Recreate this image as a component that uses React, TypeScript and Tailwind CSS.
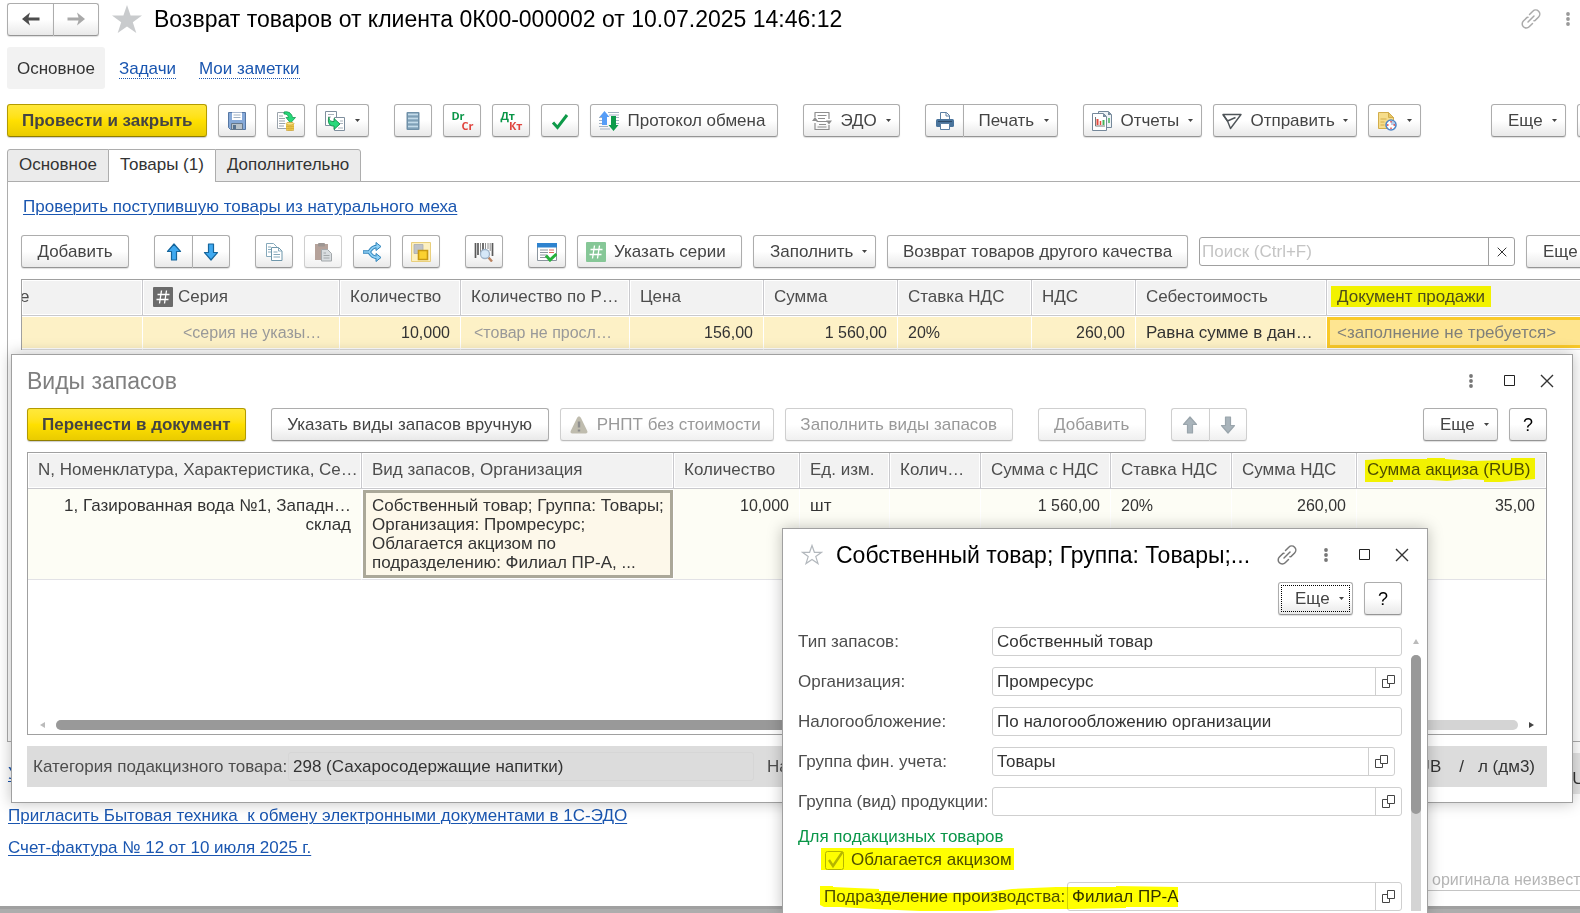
import type { ReactNode } from "react";

/* ---------- icons ---------- */

function Caret() {
    return <svg width="5" height="3" viewBox="0 0 5 3" className="shrink-0"><path d="M0 0h5L2.5 3z" fill="#444" /></svg>
}

function NavArrow({ color, flip }: { color: string, flip?: boolean }) {
    return (
        <svg width="18" height="14" viewBox="0 0 18 14" className={flip ? "rotate-180" : ""}>
            <path d="M0 7l8-6.500-1.500 5H17.500v3H6.500L8 13.500z" fill={color} />
        </svg>
    )
}

function MoveArrow({ down, disabled }: { down?: boolean, disabled?: boolean }) {
    return (
        <svg width="16" height="18" viewBox="0 0 16 18" className={down ? "rotate-180" : ""}>
            <path d="M8 1l6.500 7.500H10.500V17h-5V8.500H1.500z" fill={disabled ? "#a9b4bb" : "#3fa9f0"} stroke={disabled ? "#9aa5ac" : "#15659c"} strokeWidth="1.200" strokeLinejoin="round" />
        </svg>
    )
}

function StarSolid() {
    return <svg width="30" height="28" viewBox="0 0 30 28"><path d="M15 0l3.600 10.500H30l-9.200 6.700L24.300 28 15 21.400 5.700 28l3.500-10.800L0 10.500h11.400z" fill="#c9cbcd" /></svg>
}

function StarOutline() {
    return <svg width="22" height="21" viewBox="0 0 22 21"><path d="M11 1.500l2.400 6.800h7.200l-5.800 4.300 2.200 7L11 15.400 5 19.600l2.200-7-5.800-4.300h7.200z" fill="none" stroke="#b3b8bd" strokeWidth="1.200" /></svg>
}

function LinkIcon({ color }: { color: string }) {
    return (
        <svg width="20" height="20" viewBox="0 0 20 20" fill="none" stroke={color} strokeWidth="1.500" strokeLinecap="round">
            <path d="M7 13l6-6" />
            <path d="M8.500 5.500l3.300-3.300a4 4 0 0 1 5.800 5.800L14 11.500l-1 .3" />
            <path d="M11.500 14.500l-3.300 3.300a4 4 0 0 1-5.800-5.800L6 8.500l1-.3" />
        </svg>
    )
}

function DotsIcon({ color }: { color: string }) {
    return <svg width="4" height="14" viewBox="0 0 4 14" fill={color}><circle cx="2" cy="2" r="1.900" /><circle cx="2" cy="7" r="1.900" /><circle cx="2" cy="12" r="1.900" /></svg>
}

function MaxIcon() {
    return <svg width="11" height="11" viewBox="0 0 11 11"><path d="M.5.500h10v10H.5z" fill="none" stroke="#222" /></svg>
}

function CloseIcon({ size = 14 }: { size?: number }) {
    return <svg width={size} height={size} viewBox="0 0 14 14"><path d="M1 1l12 12M13 1L1 13" stroke="#333" strokeWidth="1.400" /></svg>
}

function SaveIcon() {
    return (
        <svg width="20" height="20" viewBox="0 0 20 20">
            <path d="M1.500 1.500h17v17h-15l-2-2z" fill="#86a9d8" stroke="#5677a3" />
            <path d="M5 1.500h10V9H5z" fill="#fff" />
            <path d="M6.500 4h7M6.500 6.500h7" stroke="#9fb0c2" />
            <path d="M4.500 12.500h11v6h-11z" fill="#b9c2c9" stroke="#65788c" />
            <path d="M6 14h3v4H6z" fill="#56718f" />
        </svg>
    )
}

function PostIcon() {
    return (
        <svg width="20" height="20" viewBox="0 0 20 20">
            <path d="M1.500 1.500h12v16h-12z" fill="#fff" stroke="#9aa3ab" />
            <path d="M3 5h4M3 7.500h6M3 10h6M3 12.500h6M3 15h5" stroke="#9aa3ab" />
            <path d="M8 1c5-1 8 2 8.500 5.500h3L14.500 12 10 6.500h2.500C12 4 11 3 8 3z" fill="#27d97a" stroke="#159a52" strokeWidth=".8" />
            <path d="M10 12.500h8v6c0 1.500-8 1.500-8 0z" fill="#f2cf52" />
            <ellipse cx="14" cy="12.700" rx="4" ry="1.400" fill="#fbe58a" stroke="#c79a2a" strokeWidth=".7" />
            <path d="M10 15c1 1.200 7 1.200 8 0M10 17c1 1.200 7 1.200 8 0M10 19c1 1 7 1 8 0" fill="none" stroke="#c79a2a" strokeWidth=".8" />
        </svg>
    )
}

function BasedOnIcon() {
    return (
        <svg width="20" height="20" viewBox="0 0 20 20">
            <path d="M.5.500h11v14H.5z" fill="#fff" stroke="#7f8f9e" />
            <path d="M3 3.500h6M3 6h3" stroke="#a9b3bc" />
            <path d="M9.500 6.500h10v13h-10z" fill="#fff" stroke="#7f8f9e" />
            <path d="M15 10h3M15 12.500h3M13 17h5" stroke="#a9b3bc" />
            <path d="M4 6c0 4 2 4.500 5 4.500V7.500l6 5.500-6 5.500V15C5 15.500 2 12 4 6z" fill="#27d97a" stroke="#138a4a" strokeWidth=".9" />
        </svg>
    )
}

function ListIcon() {
    return (
        <svg width="20" height="20" viewBox="0 0 20 20">
            <rect x="3.500" y="1" width="13" height="18" rx="1" fill="#6f90a8" />
            <path d="M5 3.500h10M5 7.500h10M5 11.500h10M5 15.500h10" stroke="#c3dbea" strokeWidth="2" />
            <path d="M5 5h10M5 9h10M5 13h10M5 17h10" stroke="#8fb0c6" />
        </svg>
    )
}

function PairIcon({ top, bottom }: { top: string, bottom: string }) {
    return (
        <span className="flex w-[22px] flex-col text-[11px] leading-[10px] font-bold" style={{ fontFamily: '"Open Sans", sans-serif' }}>
            <span className="self-start text-[#0a9648]">{top}</span>
            <span className="self-end text-[#e0443e]">{bottom}</span>
        </span>
    )
}

function CheckIcon() {
    return <svg width="20" height="20" viewBox="0 0 20 20"><path d="M3 11.500l4.500 5L17 4" fill="none" stroke="#0e9a49" strokeWidth="3" /></svg>
}

function ExchangeIcon() {
    return (
        <svg width="20" height="20" viewBox="0 0 20 20">
            <path d="M9 1.500h11M10 4h10M0 6.500h4M16 6.500h4M0 9.500h4M17 9.500h3M0 12.500h4M17 12.500h3M0 15.500h9M1 18h10" stroke="#a3b2c2" />
            <path d="M5.500 0l5 6H8v8H3V6H.5z" fill="#559df7" />
            <path d="M14.500 20l-5-6H12V5h5v9h2.500z" fill="#0d9a4a" />
        </svg>
    )
}

function EdoIcon() {
    return (
        <svg width="20" height="20" viewBox="0 0 20 20" fill="none" stroke="#8e8e8e">
            <path d="M3 6V1.500h14V8M3 12v6.500h14V14" strokeWidth="1.200" strokeLinejoin="round" />
            <path d="M5.500 4.500h9M6 7.500h7M4.500 10.500h11M7 13.500h7M5.500 16h9" strokeWidth="1.200" />
            <path d="M0 10l3-4 3 4zM14 9.500h6l-3 4z" fill="#8e8e8e" stroke="none" />
        </svg>
    )
}

function PrintIcon() {
    return (
        <svg width="20" height="20" viewBox="0 0 20 20">
            <path d="M5.500 9V1.500h6l3 3V9z" fill="#fff" stroke="#5b7fa3" />
            <path d="M11 1.500v3.500h3.500" fill="none" stroke="#5b7fa3" />
            <rect x="1" y="8" width="18" height="8" rx="1.500" fill="#4a749c" />
            <path d="M3 10.500h14" stroke="#2d4a68" />
            <path d="M5.500 12.500h9v6h-9z" fill="#fff" stroke="#5b7fa3" />
        </svg>
    )
}

function ReportIcon() {
    return (
        <svg width="20" height="20" viewBox="0 0 20 20">
            <path d="M6.500.500h10l3 3v13h-13z" fill="#eef2f5" stroke="#75889a" />
            <path d="M16 .5v3.500h3.500z" fill="#75889a" />
            <path d="M17 7v5" stroke="#46b25a" strokeWidth="1.500" />
            <path d="M.5 2.500h11l3 3v14H.5z" fill="#fff" stroke="#75889a" />
            <path d="M11 2.500V6h3.500z" fill="#75889a" />
            <path d="M3.500 6v9H13" fill="none" stroke="#777" />
            <path d="M5.500 8v6" stroke="#e34b3f" strokeWidth="2" />
            <path d="M8.500 10v4" stroke="#e34b3f" strokeWidth="1.500" />
            <path d="M11.500 9v5" stroke="#46b25a" strokeWidth="2" />
        </svg>
    )
}

function SendIcon() {
    return (
        <svg width="20" height="20" viewBox="0 0 20 20" fill="none" stroke="#4f5559" strokeWidth="1.400" strokeLinejoin="round">
            <path d="M1 3.500h18L8.500 17.500 5.500 10z" />
            <path d="M1 3.500L5.500 10l8-3.500" />
        </svg>
    )
}

function DocClockIcon() {
    return (
        <svg width="20" height="20" viewBox="0 0 20 20">
            <path d="M1.500 1.500h10l5 5v11h-15z" fill="#f6dd8b" stroke="#d2ad4c" />
            <path d="M11.500 1.500v5h5z" fill="#e7c566" stroke="#d2ad4c" />
            <path d="M3.500 8h6M3.500 11h4M3.500 14h4" stroke="#d2ad4c" />
            <circle cx="14" cy="14" r="5" fill="#fff" stroke="#4f86c6" strokeWidth="1.600" />
            <path d="M14 14V9.800A4.200 4.200 0 0 1 18.200 14z" fill="#b8cce8" />
            <path d="M14 10v1.500M14 16.500V18M10 14h1.500M16.500 14H18" stroke="#e23b3b" strokeWidth="1.300" />
        </svg>
    )
}

function CopyIcon() {
    return (
        <svg width="20" height="20" viewBox="0 0 20 20">
            <path d="M2.500 1.500h7l3 3v10h-10z" fill="#fff" stroke="#86a9bb" />
            <path d="M4 5h3M4 7.500h3M4 10h3" stroke="#86a9bb" />
            <path d="M7.500 5.500h7l3.500 3.500v9.500H7.500z" fill="#fff" stroke="#6f97ab" />
            <path d="M14.500 5.500V9H18M9.500 10h4M9.500 12.500h6.500M9.500 15h6.500" fill="none" stroke="#86a9bb" />
        </svg>
    )
}

function PasteIcon() {
    return (
        <svg width="20" height="20" viewBox="0 0 20 20">
            <rect x="2" y="2" width="13" height="16" fill="#b5a29a" />
            <rect x="5" y="1" width="7" height="3.500" rx="1" fill="#9d9693" />
            <path d="M8.500 7.500h6l4 4v7.500h-10z" fill="#d9dde0" stroke="#a3a8ab" />
            <path d="M10.500 11h2.500M10.500 13.500h6M10.500 16h6" stroke="#a3a8ab" />
        </svg>
    )
}

function SplitIcon() {
    return (
        <svg width="20" height="20" viewBox="0 0 20 20" fill="none" strokeLinejoin="round">
            <path d="M1 10h6M16 4.500C11 4.500 10 6 7 10c3 4 4 5.500 9 5.500" stroke="#2f83ba" strokeWidth="3.600" />
            <path d="M14 .5l5 4-5 4zM14 11.500l5 4-5 4z" fill="#8fd0f5" stroke="#2f83ba" />
            <path d="M1.500 10H7M16 4.500C11 4.500 10 6 7 10c3 4 4 5.500 9 5.500" stroke="#8fd0f5" strokeWidth="1.700" />
        </svg>
    )
}

function LayersIcon() {
    return (
        <svg width="20" height="20" viewBox="0 0 20 20">
            <path d="M.5.500h19v19H.5z" fill="#fdf0c0" stroke="#e9cf7c" />
            <path d="M3 2.500h9v9H3z" fill="#bfc2c7" stroke="#a9adb3" strokeWidth=".8" />
            <path d="M7.500 8.500h9v9h-9z" fill="#fbd12f" stroke="#c99a12" strokeWidth="1.600" />
        </svg>
    )
}

function BarcodeIcon() {
    return (
        <svg width="20" height="20" viewBox="0 0 20 20">
            <path d="M1.500 1v15M4 1v12M9 1v8M18.500 1v13" stroke="#5a5a5a" strokeWidth="1.700" />
            <path d="M6.500 1v12M11.500 1v6M14 1v6M16.200 1v8" stroke="#8b8b8b" />
            <path d="M14.500 15.500l3.500 4" stroke="#b98260" strokeWidth="2.400" />
            <circle cx="11" cy="12" r="4.500" fill="#d5e7f8" stroke="#9fb3c8" strokeWidth="1.300" />
        </svg>
    )
}

function TableCheckIcon() {
    return (
        <svg width="20" height="20" viewBox="0 0 20 20">
            <path d="M.5 1.500h19v17H.5z" fill="#fff" stroke="#8b959e" />
            <path d="M0 1h20v4.500H0z" fill="#2e83cf" />
            <path d="M3 8h8M3 10.500h8M3 13h7M3 15.500h6" stroke="#8b959e" />
            <path d="M12 8h5M12 10.500h5" stroke="#e0665e" />
            <path d="M9 13.500l4 4.500 6.500-6" fill="none" stroke="#27b13a" strokeWidth="3" />
        </svg>
    )
}

function HashIcon({ fill }: { fill: string }) {
    return (
        <svg width="20" height="20" viewBox="0 0 20 20" className="shrink-0">
            <rect width="20" height="20" rx="1" fill={fill} />
            <path d="M8.500 3.500l-2 13M13.500 3.500l-2 13M4.500 7.500h12M3.500 12.500h12" stroke="#fff" strokeWidth="1.300" />
        </svg>
    )
}

function WarnIcon() {
    return (
        <svg width="20" height="20" viewBox="0 0 20 20">
            <path d="M10 1.500c1 0 1.600.6 2 1.500l6.300 13c.6 1.300-.2 2.500-1.600 2.500H3.300c-1.400 0-2.200-1.200-1.600-2.500L8 3c.4-.9 1-1.500 2-1.500z" fill="#bfbcae" />
            <path d="M10 6.500v6M10 14.500v2" stroke="#8d8d8d" strokeWidth="2.400" />
        </svg>
    )
}

function OpenIcon() {
    return <svg width="13" height="13" viewBox="0 0 13 13" fill="none" stroke="#444"><path d="M5.500.500h7v8h-7z" /><path d="M5.500 4.500h-5v8h7v-4" /></svg>
}

/* ---------- controls ---------- */

const btn = "flex h-[33px] shrink-0 items-center rounded-[3px] border border-[#adadad] border-b-[#959595] bg-linear-to-b from-white from-50% to-[#e9e9e9] text-[#444] shadow-[0_1px_1px_#00000022]"
const btnOff = "flex h-[33px] shrink-0 items-center rounded-[3px] border border-[#cfcfcf] border-b-[#bdbdbd] bg-linear-to-b from-white from-50% to-[#f0f0f0] text-[#999] shadow-[0_1px_1px_#00000011]"
const btnYellow = "h-[33px] shrink-0 rounded-[3px] border border-[#b39b00] border-b-[#8f7d00] bg-linear-to-b from-[#ffe83a] via-[#ffe000] to-[#e9cb00] px-[14px] font-bold text-[#444] shadow-[0_1px_1px_#00000033]"
const link = "text-[#1a56b0] underline decoration-1 underline-offset-2"
const navLink = "mt-[2px] border-b border-dotted border-[#1a56b0] leading-[18px] text-[#1a56b0]"

function IconButton({ label, children, disabled }: { label: string, children: ReactNode, disabled?: boolean }) {
    return <button aria-label={label} disabled={disabled} className={(disabled ? btnOff : btn) + " w-[38px] justify-center"}>{children}</button>
}

function TextButton({ children, icon, menu, disabled, width }: { children: ReactNode, icon?: ReactNode, menu?: boolean, disabled?: boolean, width: string }) {
    return (
        <button disabled={disabled} className={(disabled ? btnOff : btn) + " " + width + (icon ? " pl-2" : menu ? " pl-4" : " justify-center")}>
            {icon && <span className="mr-2">{icon}</span>}
            {children}
            {menu && <span className="mr-2 ml-auto"><Caret /></span>}
        </button>
    )
}

function IconMenu({ label, children }: { label: string, children: ReactNode }) {
    return <button aria-label={label} className={btn + " gap-[10px] px-2"}>{children}<Caret /></button>
}

function MovePair({ disabled }: { disabled?: boolean }) {
    return (
        <div className="flex shrink-0">
            <button aria-label="Вверх" disabled={disabled} className={(disabled ? btnOff : btn) + " w-[38px] justify-center rounded-r-none border-r-0"}><MoveArrow disabled={disabled} /></button>
            <button aria-label="Вниз" disabled={disabled} className={(disabled ? btnOff : btn) + " w-[38px] justify-center rounded-l-none"}><MoveArrow down disabled={disabled} /></button>
        </div>
    )
}

function Field({ id, label, value, open, short }: { id: string, label: string, value: string, open?: boolean, short?: boolean }) {
    return (
        <div className={"flex h-[29px] items-center" + (short ? " pr-[7px]" : "")}>
            <label htmlFor={id} className="w-[194px] shrink-0 text-[#4d4d4d]">{label}</label>
            <div className="flex h-full flex-1 rounded-[3px] border border-[#cfcfcf] bg-white">
                <input id={id} readOnly defaultValue={value} className="min-w-0 flex-1 px-1 text-[#333] outline-none" />
                {open && <button aria-label="Открыть" className="flex w-[26px] items-center justify-center border-l border-[#cfcfcf]"><OpenIcon /></button>}
            </div>
        </div>
    )
}

/* ---------- tables ---------- */

const th = "h-9 overflow-hidden text-ellipsis border-r border-b border-[#c9c9cd] bg-[#f2f2f2] pl-[10px] pb-[2px] text-left font-normal text-[#4d4d4d] shadow-[inset_0_0_0_1px_#fff]"
const tdGoods = "h-[34px] overflow-hidden text-ellipsis border-r border-b border-r-white border-b-[#dcdcdc] bg-[#fdf1c6] px-[10px] shadow-[inset_0_1px_0_#fff,inset_0_-1px_0_#fff]"
const tdStock = "h-[91px] overflow-hidden text-ellipsis border-r border-b border-r-white border-b-[#e2e2e6] bg-[#fdfdf5] px-[10px] pt-[7px] align-top leading-[19px]"
const num = " text-right text-[16px]"

function GoodsTable() {
    return (
        <table className="w-full table-fixed border-separate border-spacing-0 border-t border-l border-[#a0a0a0] text-[#333]">
            <colgroup>
                <col className="w-[121px]" /><col className="w-[197px]" /><col className="w-[121px]" /><col className="w-[169px]" />
                <col className="w-[134px]" /><col className="w-[134px]" /><col className="w-[134px]" /><col className="w-[104px]" />
                <col className="w-[191px]" /><col />
            </colgroup>
            <thead>
                <tr>
                    <th className={th + " -indent-3"}>е</th>
                    <th className={th}><span className="flex items-center gap-[5px]"><HashIcon fill="#6b6b6b" />Серия</span></th>
                    <th className={th}>Количество</th>
                    <th className={th + " pr-[10px]"}>Количество по РНПТ</th>
                    <th className={th}>Цена</th>
                    <th className={th}>Сумма</th>
                    <th className={th}>Ставка НДС</th>
                    <th className={th}>НДС</th>
                    <th className={th}>Себестоимость</th>
                    <th className={th}><mark className="-ml-[6px] bg-[#f2f200] px-[6px] py-px text-[#4d4d1a]">Документ продажи</mark></th>
                </tr>
            </thead>
            <tbody>
                <tr>
                    <td className={tdGoods}></td>
                    <td className={tdGoods + " pl-10 text-[16px] text-[#999]"}>&lt;серия не указывается&gt;</td>
                    <td className={tdGoods + num}>10,000</td>
                    <td className={tdGoods + " pl-[13px] text-[16px] text-[#999]"}>&lt;товар не прослеживается&gt;</td>
                    <td className={tdGoods + num}>156,00</td>
                    <td className={tdGoods + num}>1 560,00</td>
                    <td className={tdGoods + " text-[16px]"}>20%</td>
                    <td className={tdGoods + num}>260,00</td>
                    <td className={tdGoods}>Равна сумме в данных</td>
                    <td className="border-b border-[#dcdcdc] py-px"><div className="flex h-[31px] items-center border-[3px] border-[#f9c929] bg-[#fee591] pl-[7px] text-[#80807a]">&lt;заполнение не требуется&gt;</div></td>
                </tr>
            </tbody>
        </table>
    )
}

function StockTable() {
    return (
        <table className="w-full table-fixed border-separate border-spacing-0 text-[#333]">
            <colgroup>
                <col className="w-[334px]" /><col className="w-[312px]" /><col className="w-[126px]" /><col className="w-[90px]" />
                <col className="w-[91px]" /><col className="w-[130px]" /><col className="w-[121px]" /><col className="w-[125px]" /><col />
            </colgroup>
            <thead>
                <tr>
                    <th className={th}>N, Номенклатура, Характеристика, Се…</th>
                    <th className={th}>Вид запасов, Организация</th>
                    <th className={th}>Количество</th>
                    <th className={th}>Ед. изм.</th>
                    <th className={th + " pr-[10px]"}>Количество</th>
                    <th className={th}>Сумма с НДС</th>
                    <th className={th}>Ставка НДС</th>
                    <th className={th}>Сумма НДС</th>
                    <th className={th + " relative border-r-0"}>
                        Сумма акциза (RUB)
                        <svg width="170" height="25" viewBox="0 0 170 25" className="pointer-events-none absolute left-2 top-[5px] mix-blend-multiply">
                            <path d="M0 2l20-1h42V0h18v1l26 2 40-1V0h24v21l-12 1-22 2h-17v-2l-20-1-17 2-16-1H28v2H0z" fill="#ffff00" />
                        </svg>
                    </th>
                </tr>
            </thead>
            <tbody>
                <tr>
                    <td className={tdStock + " text-right"}>
                        <div>1, Газированная вода №1, Западн…</div>
                        <div>склад</div>
                    </td>
                    <td className="border-b border-[#e2e2e6] p-px align-top">
                        <div className="h-[88px] overflow-hidden border-[3px] border-[#aba899] bg-[#fdf8ea] pt-[3px] pl-[6px] leading-[19px]">
                            Собственный товар; Группа: Товары;<br />Организация: Промресурс;<br />Облагается акцизом по<br />подразделению: Филиал ПР-А, ...
                        </div>
                    </td>
                    <td className={tdStock + num}>10,000</td>
                    <td className={tdStock}>шт</td>
                    <td className={tdStock}></td>
                    <td className={tdStock + num}>1 560,00</td>
                    <td className={tdStock + " text-[16px]"}>20%</td>
                    <td className={tdStock + num}>260,00</td>
                    <td className={tdStock + num}>35,00</td>
                </tr>
            </tbody>
        </table>
    )
}

/* ---------- windows ---------- */

function StockWindow() {
    return (
        <section className="absolute top-[354px] right-[7px] left-[11px] flex h-[449px] flex-col border border-[#a0a0a0] bg-white pr-[25px] pl-[15px] shadow-[0_0_14px_#00000040]">
            <div className="-mr-[7px] flex h-[53px] items-center pb-[2px]">
                <h2 className="text-[23px] text-[#7f7f7f]">Виды запасов</h2>
                <div className="ml-auto flex items-center">
                    <button aria-label="Меню"><DotsIcon color="#777" /></button>
                    <button aria-label="Развернуть" className="ml-[31px]"><MaxIcon /></button>
                    <button aria-label="Закрыть" className="ml-[25px]"><CloseIcon /></button>
                </div>
            </div>
            <div className="flex gap-[11px]">
                <button className={btnYellow + " mr-[14px]"}>Перенести в документ</button>
                <TextButton width="w-[278px]">Указать виды запасов вручную</TextButton>
                <TextButton width="w-[214px]" icon={<WarnIcon />} disabled>РНПТ без стоимости</TextButton>
                <TextButton width="w-[228px]" disabled>Заполнить виды запасов</TextButton>
                <div className="ml-[14px] mr-[14px]"><TextButton width="w-[108px]" disabled>Добавить</TextButton></div>
                <MovePair disabled />
                <div className="ml-auto flex gap-[11px]">
                    <TextButton width="w-[75px]" menu>Еще</TextButton>
                    <IconButton label="Справка"><span className="text-lg text-black">?</span></IconButton>
                </div>
            </div>
            <div className="mt-[11px] flex h-[283px] shrink-0 flex-col border border-[#a0a0a0]">
                <StockTable />
                <div className="mt-auto mb-1 flex items-center gap-[11px] px-3">
                    <svg width="5" height="6" viewBox="0 0 5 6"><path d="M5 0v6L0 3z" fill="#bbb" /></svg>
                    <div className="h-[10px] flex-1 rounded-full bg-[#d4d4d4]"><div className="h-full w-4/5 rounded-full bg-[#999]"></div></div>
                    <svg width="5" height="6" viewBox="0 0 5 6"><path d="M0 0v6l5-3z" fill="#444" /></svg>
                </div>
            </div>
            <div className="mt-[11px] flex h-[41px] items-center bg-[#dcdcdc] px-[6px] text-[#4d4d4d]">
                <label htmlFor="category" className="w-[255px]">Категория подакцизного товара:</label>
                <input id="category" readOnly defaultValue="298 (Сахаросодержащие напитки)" className="h-[29px] w-[466px] rounded-[3px] border border-[#d6d6d6] bg-transparent px-1 text-[#333]" />
                <span className="ml-[13px]">Налоговая ставка:</span>
                <div className="ml-auto flex pr-[6px] text-[#333]"><span>RUB</span><span className="mr-[14px] ml-[18px]">/</span><span>л (дм3)</span></div>
            </div>
        </section>
    )
}

function KindWindow() {
    return (
        <section className="absolute top-[528px] right-[152px] bottom-0 w-[646px] overflow-hidden border border-b-0 border-[#a0a0a0] bg-white pl-[15px] shadow-[0_0_14px_#00000040]">
            <div className="flex h-[53px] items-center pr-[18px] pb-[2px] pl-[3px]">
                <StarOutline />
                <h2 className="ml-[13px] text-[23px] text-black">Собственный товар; Группа: Товары;...</h2>
                <div className="ml-auto flex items-center">
                    <button aria-label="Ссылка"><LinkIcon color="#777" /></button>
                    <button aria-label="Меню" className="ml-[27px]"><DotsIcon color="#777" /></button>
                    <button aria-label="Развернуть" className="ml-[31px]"><MaxIcon /></button>
                    <button aria-label="Закрыть" className="ml-[25px]"><CloseIcon /></button>
                </div>
            </div>
            <div className="flex justify-end gap-[11px] pr-[25px]">
                <div className="relative">
                    <TextButton width="w-[75px]" menu>Еще</TextButton>
                    <span className="pointer-events-none absolute inset-[3px] border border-dotted border-black"></span>
                </div>
                <IconButton label="Справка"><span className="text-lg text-black">?</span></IconButton>
            </div>
            <div className="mt-3 flex">
                <div className="flex-1">
                    <div className="flex flex-col gap-[11px]">
                        <Field id="kind" label="Тип запасов:" value="Собственный товар" />
                        <Field id="org" label="Организация:" value="Промресурс" open />
                        <Field id="tax" label="Налогообложение:" value="По налогообложению организации" />
                        <Field id="fin" label="Группа фин. учета:" value="Товары" open short />
                        <Field id="group" label="Группа (вид) продукции:" value="" open />
                    </div>
                    <h3 className="mt-[10px] h-[22px] leading-[22px] text-[#0a9648]">Для подакцизных товаров</h3>
                    <label className="ml-[23px] flex h-[22px] w-[193px] items-center gap-[7px] bg-[#ffff00] pt-[2px] pl-1 text-[#4d4d00]">
                        <input type="checkbox" defaultChecked className="peer sr-only" />
                        <svg width="19" height="19" viewBox="0 0 19 19">
                            <rect x=".5" y=".5" width="18" height="18" rx="2" fill="none" stroke="#b5b500" />
                            <path d="M4 9l4 6L17.500 1" fill="none" stroke="#b5b500" strokeWidth="2.400" />
                        </svg>
                        Облагается акцизом
                    </label>
                    <div className="relative mt-3 flex h-[29px] items-center pl-[26px]">
                        <label htmlFor="dep" className="w-[243px] text-[#4d4d4d]">Подразделение производства:</label>
                        <div className="flex h-full flex-1 rounded-[3px] border border-[#cfcfcf]">
                            <input id="dep" readOnly defaultValue="Филиал ПР-А" className="min-w-0 flex-1 px-1 text-[#333] outline-none" />
                            <button aria-label="Открыть" className="flex w-[26px] items-center justify-center border-l border-[#cfcfcf]"><OpenIcon /></button>
                        </div>
                        <svg width="360" height="27" viewBox="0 0 360 27" className="pointer-events-none absolute top-[3px] left-[22px] mix-blend-multiply">
                            <path d="M0 1h13v1l22 1 24 1v2l64 2 47-1 22-3 44-2h60V1l62 1v20h-52v1l-52 1h-62l-24 2H100l-46-2-34-2H4L0 20z" fill="#ffff00" />
                        </svg>
                    </div>
                </div>
                <div className="flex w-[25px] flex-col items-center pr-[1px] pl-1">
                    <svg width="6" height="5" viewBox="0 0 6 5" className="mt-3 mb-[11px] shrink-0"><path d="M0 5h6L3 0z" fill="#bbb" /></svg>
                    <div className="w-[10px] flex-1 rounded-t-full bg-[#d4d4d4]"><div className="h-[159px] rounded-full bg-[#999]"></div></div>
                </div>
            </div>
        </section>
    )
}

function App() {
    return (
        <div className="relative flex h-screen flex-col overflow-hidden bg-white whitespace-nowrap text-[17px] leading-5 text-[#333]" style={{ fontFamily: '"Liberation Sans", Arial, sans-serif' }}>
            <header className="flex h-[38px] shrink-0 items-center pl-[7px]">
                <div className="flex">
                    <button aria-label="Назад" className={btn + " h-[30px] w-[46px] justify-center rounded-r-none border-r-0"}><NavArrow color="#4d4d4d" /></button>
                    <button aria-label="Вперед" className={btn + " h-[30px] w-[46px] justify-center rounded-l-none"}><NavArrow color="#a9a9a9" flip /></button>
                </div>
                <button aria-label="Избранное" className="ml-[13px]"><StarSolid /></button>
                <h1 className="ml-3 text-[23px] text-black">Возврат товаров от клиента 0К00-000002 от 10.07.2025 14:46:12</h1>
                <div className="ml-auto flex items-center gap-[25px] pr-[10px]">
                    <button aria-label="Ссылка"><LinkIcon color="#aaa" /></button>
                    <button aria-label="Меню"><DotsIcon color="#999" /></button>
                </div>
            </header>

            <nav className="mt-[9px] flex shrink-0 items-center pl-[7px]">
                <a href="#main" className="rounded-[3px] bg-[#f2f2f2] px-[10px] pt-3 pb-[10px] text-[#333]">Основное</a>
                <a href="#tasks" className={navLink + " ml-[14px]"}>Задачи</a>
                <a href="#notes" className={navLink + " ml-[23px]"}>Мои заметки</a>
            </nav>

            <div className="mt-[15px] -mr-[35px] flex shrink-0 gap-[25px] pl-[7px]">
                <div className="flex gap-[11px]">
                    <button className={btnYellow}>Провести и закрыть</button>
                    <IconButton label="Записать"><SaveIcon /></IconButton>
                    <IconButton label="Провести"><PostIcon /></IconButton>
                    <IconMenu label="Создать на основании"><BasedOnIcon /></IconMenu>
                </div>
                <div className="flex gap-[11px]">
                    <IconButton label="Реестр"><ListIcon /></IconButton>
                    <IconButton label="Проводки"><PairIcon top="Dr" bottom="Cr" /></IconButton>
                    <IconButton label="Проводки регл."><PairIcon top="Дт" bottom="Кт" /></IconButton>
                    <IconButton label="Проверить"><CheckIcon /></IconButton>
                    <TextButton width="w-[188px]" icon={<ExchangeIcon />}>Протокол обмена</TextButton>
                </div>
                <TextButton width="w-[97px]" icon={<EdoIcon />} menu>ЭДО</TextButton>
                <div className="flex">
                    <button aria-label="Печать сразу" className={btn + " w-[38px] justify-center rounded-r-none border-r-0"}><PrintIcon /></button>
                    <button className={btn + " w-[95px] justify-between rounded-l-none pr-2 pl-[14px]"}>Печать<Caret /></button>
                </div>
                <div className="flex gap-[11px]">
                    <TextButton width="w-[119px]" icon={<ReportIcon />} menu>Отчеты</TextButton>
                    <TextButton width="w-[144px]" icon={<SendIcon />} menu>Отправить</TextButton>
                    <IconMenu label="Напоминание"><DocClockIcon /></IconMenu>
                </div>
                <div className="ml-auto flex gap-[11px]">
                    <TextButton width="w-[75px]" menu>Еще</TextButton>
                    <IconButton label="Справка">?</IconButton>
                </div>
            </div>

            <div role="tablist" className="relative z-10 mt-3 -mb-px flex h-[33px] shrink-0 pl-[7px]">
                <button role="tab" className="rounded-tl-[3px] border border-[#adadad] bg-[#ebebeb] px-[11px] pb-[2px]">Основное</button>
                <button role="tab" aria-selected="true" className="border-t border-[#adadad] bg-white px-[11px] pb-[2px]">Товары (1)</button>
                <button role="tab" className="rounded-tr-[3px] border border-[#adadad] bg-[#ebebeb] px-[11px] pb-[2px]">Дополнительно</button>
            </div>
            <main className="-mr-[22px] ml-[7px] h-[561px] shrink-0 border border-[#adadad] pl-[13px]">
                <p className="mt-[15px] pl-[2px]"><a href="#check" className={link}>Проверить поступившую товары из натурального меха</a></p>
                <div className="mt-[18px] flex gap-[11px]">
                    <TextButton width="w-[108px]">Добавить</TextButton>
                    <div className="ml-[14px] mr-[14px]"><MovePair /></div>
                    <IconButton label="Копировать"><CopyIcon /></IconButton>
                    <IconButton label="Вставить" disabled><PasteIcon /></IconButton>
                    <IconButton label="Разбить"><SplitIcon /></IconButton>
                    <IconButton label="Упаковки"><LayersIcon /></IconButton>
                    <div className="ml-[14px] mr-[14px]"><IconButton label="Штрихкод"><BarcodeIcon /></IconButton></div>
                    <IconButton label="Подбор"><TableCheckIcon /></IconButton>
                    <TextButton width="w-[165px]" icon={<HashIcon fill="#86c797" />}>Указать серии</TextButton>
                    <TextButton width="w-[123px]" menu>Заполнить</TextButton>
                    <TextButton width="w-[301px]">Возврат товаров другого качества</TextButton>
                    <div className="mt-[2px] flex h-[29px] min-w-0 flex-1 rounded-[3px] border border-[#a0a0a0]">
                        <input aria-label="Поиск" placeholder="Поиск (Ctrl+F)" className="min-w-0 flex-1 px-[2px] outline-none placeholder:text-[#c4c4c4]" />
                        <button aria-label="Очистить" className="flex w-[26px] items-center justify-center border-l border-[#a0a0a0]"><CloseIcon size={10} /></button>
                    </div>
                    <TextButton width="w-[75px]" menu>Еще</TextButton>
                </div>
                <div className="mt-[11px]"><GoodsTable /></div>
            </main>

            <footer className="flex min-h-0 flex-1 flex-col">
                <div className="mt-[11px] flex h-[41px] shrink-0 items-center justify-between">
                    <a href="#terms" className={link + " pl-2"}>У</a>
                    <span className="h-full w-5 bg-[#e4e4e4] pt-4">RUB</span>
                </div>
                <a href="#invite" className={link + " mt-3 self-start pl-2 whitespace-pre"}>Пригласить Бытовая техника  к обмену электронными документами в 1С-ЭДО</a>
                <a href="#invoice" className={link + " mt-3 self-start pl-2"}>Счет-фактура № 12 от 10 июля 2025 г.</a>
                <div className="mt-3 w-[152px] self-end overflow-hidden border-b border-[#c4c4c4] pl-1 text-[16px] text-[#b5b5b5]">оригинала неизвестно</div>
                <div className="mt-auto h-[7px] shrink-0 border-t-[3px] border-[#a0a0a0] bg-[#adadad]"></div>
            </footer>

            <StockWindow />
            <KindWindow />
        </div>
    )
}

export default App;
